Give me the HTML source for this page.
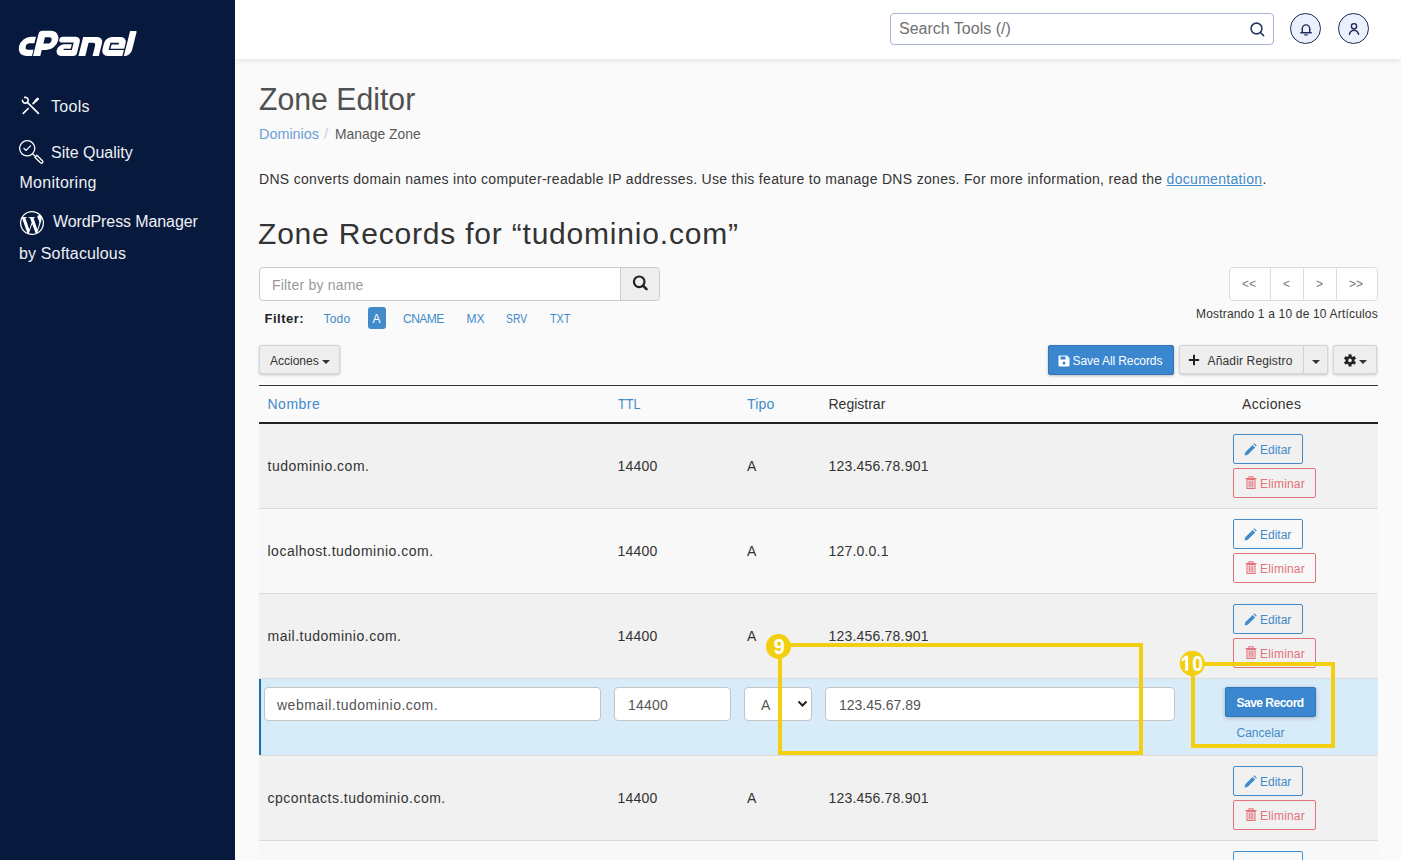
<!DOCTYPE html>
<html><head><meta charset="utf-8"><title>Zone Editor</title>
<style>
html,body{margin:0;padding:0;width:1401px;height:860px;overflow:hidden;background:#fafafa;font-family:"Liberation Sans", sans-serif;}
.t{position:absolute;white-space:nowrap;}
</style></head><body>
<div style="position:absolute;left:235px;top:59px;width:1166px;height:801px;background:#fafafa"></div>
<div style="position:absolute;left:235px;top:0px;width:1166px;height:59px;background:#fff;box-shadow:0 2px 6px rgba(0,0,0,.09);z-index:2"></div>
<div style="position:absolute;left:0px;top:0px;width:235px;height:860px;background:#07193c;z-index:3"></div>
<div style="position:absolute;left:890px;top:13px;width:382px;height:30px;border:1px solid #a8b3d4;border-radius:4px;background:#fff;z-index:4"></div>
<div class="t" style="left:899.00px;top:21px;font-size:16px;line-height:16px;color:#707070;z-index:5">Search Tools (/)</div>
<svg style="position:absolute;left:1248px;top:19px;z-index:5" width="20" height="20" viewBox="0 0 20 20">
<circle cx="8.5" cy="9.5" r="5.4" fill="none" stroke="#25396b" stroke-width="1.6"/>
<line x1="12.5" y1="13.5" x2="15.6" y2="16.6" stroke="#25396b" stroke-width="1.6" stroke-linecap="round"/></svg>
<div style="position:absolute;left:1290px;top:13px;width:29px;height:29px;border:1.5px solid #1b2a57;border-radius:50%;background:#eceffc;z-index:4"></div>
<div style="position:absolute;left:1338px;top:13px;width:29px;height:29px;border:1.5px solid #1b2a57;border-radius:50%;background:#eceffc;z-index:4"></div>
<svg style="position:absolute;left:1296px;top:19px;z-index:5" width="20" height="20" viewBox="0 0 20 20">
<path d="M6.3 13.6 V9.6 a3.7 3.7 0 0 1 7.4 0 V13.6" fill="none" stroke="#1b2a57" stroke-width="1.4"/>
<line x1="4.8" y1="13.8" x2="15.2" y2="13.8" stroke="#1b2a57" stroke-width="1.4" stroke-linecap="round"/>
<line x1="8.8" y1="15.9" x2="11.2" y2="15.9" stroke="#1b2a57" stroke-width="1.2" stroke-linecap="round"/></svg>
<svg style="position:absolute;left:1344px;top:19px;z-index:5" width="20" height="20" viewBox="0 0 20 20">
<circle cx="10" cy="7.2" r="2.6" fill="none" stroke="#1b2a57" stroke-width="1.4"/>
<path d="M5.4 15.3 Q6.5 11.3 10 11.3 Q13.5 11.3 14.6 15.3" fill="none" stroke="#1b2a57" stroke-width="1.4" stroke-linecap="round"/></svg>
<svg style="position:absolute;left:0;top:0;z-index:4" width="235" height="280" viewBox="0 0 235 280">
<g transform="translate(0 56) skewX(-14) translate(0 -56)">
<g fill="#fff">
<path d="M31.2,36.8 H26.2 A9.6,9.6 0 0 0 26.2,56 H32 V49.8 H26.65 A3.25,3.25 0 0 1 26.65,43.3 H31.2 Z"/>
<path d="M33,56 V34 A3.2,3.2 0 0 1 36.2,30.8 H44.65 A9.65,9.65 0 0 1 44.65,50.1 H40.3 V56 Z"/>
<path d="M58,36.8 H71 A5.3,5.3 0 0 1 76.3,42.1 V53 A3,3 0 0 1 73.3,56 H70.3 V42.4 H58 A2.8,2.8 0 0 1 58,36.8 Z"/>
<path d="M68.9,44.3 H61.05 A5.85,5.85 0 0 0 61.05,56 H70.8 V50.1 H62 V48.8 H68.9 Z"/>
<path d="M78.4,56 V36.9 H92.5 A6.3,6.3 0 0 1 98.8,43.2 V56 H92.5 V45.8 A3,3 0 0 0 89.5,42.8 H85.3 V56 Z"/>
<path d="M107.5,36.9 H116.1 A6.3,6.3 0 0 1 122.4,43.2 V56 H107.5 A6.7,6.7 0 0 1 100.8,49.3 V43.6 A6.7,6.7 0 0 1 107.5,36.9 Z"/>
<path d="M123.9,31 H129.6 A1,1 0 0 1 130.6,32 V49.7 A6.3,6.3 0 0 1 124.3,56 H123.8 Z"/>
</g>
<g fill="#07193c">
<path d="M40.3,37.3 H44.45 A3.15,3.15 0 0 1 44.45,43.6 H40.3 Z"/>
<path d="M107.1,42.8 H115.7 V44.4 H108.7 V48.8 H123 V49.9 H107.1 Z"/>
</g></g>
<g stroke="#fff" fill="none" stroke-linecap="round">
<path d="M24.7 97.4 A2.9 2.9 0 1 1 22.4 100.3" stroke-width="1.6"/>
<line x1="27.6" y1="102.6" x2="38.4" y2="113.4" stroke-width="1.7"/>
<line x1="23.3" y1="113.4" x2="28.2" y2="108.5" stroke-width="1.7"/>
<line x1="33.2" y1="103.5" x2="35" y2="101.7" stroke-width="1.9"/>
<line x1="35.4" y1="101.2" x2="37.7" y2="98.9" stroke-width="2.6"/>
</g>
<g stroke="#fff" stroke-width="1.3" fill="none">
<circle cx="27.2" cy="148.3" r="7.6"/>
<path d="M24 148.5 L26.1 150.4 L30.5 145.9" stroke-linecap="round" stroke-linejoin="round"/>
<line x1="32.6" y1="153.7" x2="35" y2="156.1"/>
<path d="M34.9 157.2 L36.9 155.2 L42.5 160.8 A1.41 1.41 0 0 1 40.5 162.8 Z" stroke-linejoin="round"/>
</g>
<g transform="translate(20 211)">
<path fill="#fff" d="M21.469 6.825c.84 1.537 1.318 3.3 1.318 5.175 0 3.979-2.156 7.456-5.363 9.325l3.295-9.527c.615-1.54.82-2.771.82-3.864 0-.405-.026-.78-.07-1.11m-7.981.105c.647-.03 1.232-.105 1.232-.105.582-.075.514-.93-.067-.899 0 0-1.755.135-2.88.135-1.064 0-2.85-.15-2.85-.15-.585-.03-.661.855-.075.885 0 0 .54.061 1.125.09l1.68 4.605-2.37 7.08L5.354 6.9c.649-.03 1.234-.1 1.234-.1.585-.075.516-.93-.065-.896 0 0-1.746.138-2.874.138-.2 0-.438-.008-.69-.015C4.911 3.15 8.235 1.215 12 1.215c2.809 0 5.365 1.072 7.286 2.833-.046-.003-.091-.009-.141-.009-1.06 0-1.812.923-1.812 1.914 0 .89.513 1.643 1.06 2.531.411.72.89 1.643.89 2.977 0 .915-.354 1.994-.821 3.479l-1.075 3.585-3.9-11.61.001.014zM12 22.784c-1.059 0-2.081-.153-3.048-.437l3.237-9.406 3.315 9.087c.024.053.05.101.078.149-1.12.393-2.325.609-3.582.609M1.211 12c0-1.564.336-3.05.935-4.39L7.29 21.709C3.694 19.96 1.212 16.271 1.211 12M12 0C5.385 0 0 5.385 0 12s5.385 12 12 12 12-5.385 12-12S18.615 0 12 0"/>
</g>
</svg>
<div class="t" style="left:51.00px;top:99px;font-size:16px;line-height:16px;color:#eef0f5;letter-spacing:0.3px;z-index:4">Tools</div>
<div class="t" style="left:51.00px;top:145px;font-size:16px;line-height:16px;color:#eef0f5;z-index:4">Site Quality</div>
<div class="t" style="left:19.50px;top:175px;font-size:16px;line-height:16px;color:#eef0f5;letter-spacing:0.25px;z-index:4">Monitoring</div>
<div class="t" style="left:53.00px;top:214px;font-size:16px;line-height:16px;color:#eef0f5;letter-spacing:-0.1px;z-index:4">WordPress Manager</div>
<div class="t" style="left:19.00px;top:246px;font-size:16px;line-height:16px;color:#eef0f5;letter-spacing:0.15px;z-index:4">by Softaculous</div>
<div class="t" style="left:259.00px;top:84px;font-size:31px;line-height:31px;color:#505050;transform:scaleX(0.975);transform-origin:0 0;">Zone Editor</div>
<div class="t" style="left:258.50px;top:126px;font-size:15px;line-height:15px;color:#6a9fd8;transform:scaleX(0.96);transform-origin:0 0;">Dominios</div>
<div class="t" style="left:324.00px;top:126px;font-size:15px;line-height:15px;color:#cfcfcf;">/</div>
<div class="t" style="left:335.30px;top:126px;font-size:15px;line-height:15px;color:#5a5a5a;transform:scaleX(0.925);transform-origin:0 0;">Manage Zone</div>
<div class="t" style="left:259.00px;top:172px;font-size:14px;line-height:14px;color:#333;letter-spacing:0.31px;">DNS converts domain names into computer-readable IP addresses. Use this feature to manage DNS zones. For more information, read the <span style="color:#428bca;text-decoration:underline">documentation</span>.</div>
<div class="t" style="left:258.00px;top:219px;font-size:30px;line-height:30px;color:#333;letter-spacing:0.8px;">Zone Records for “tudominio.com”</div>
<div style="position:absolute;left:259px;top:267px;width:361px;height:32px;border:1px solid #ccc;border-radius:4px 0 0 4px;background:#fff"></div>
<div class="t" style="left:272.00px;top:278px;font-size:14px;line-height:14px;color:#999;letter-spacing:0.2px;">Filter by name</div>
<div style="position:absolute;left:620px;top:267px;width:38px;height:32px;border:1px solid #ccc;border-radius:0 4px 4px 0;background:#eee"></div>
<svg style="position:absolute;left:630px;top:272px" width="20" height="22" viewBox="0 0 20 22">
<circle cx="9.2" cy="9.8" r="5.3" fill="none" stroke="#222" stroke-width="2.2"/>
<line x1="13" y1="13.6" x2="16.5" y2="17.1" stroke="#222" stroke-width="2.6" stroke-linecap="round"/></svg>
<div class="t" style="left:264.50px;top:312px;font-size:13px;line-height:13px;color:#222;font-weight:700;letter-spacing:0.5px;">Filter:</div>
<div class="t" style="left:323.50px;top:313px;font-size:12px;line-height:12px;color:#428bca;letter-spacing:0.2px;">Todo</div>
<div style="position:absolute;left:368px;top:307px;width:18px;height:21.5px;background:#428bca;border-radius:3px"></div>
<div class="t" style="left:372.50px;top:313px;font-size:12px;line-height:12px;color:#fff;">A</div>
<div class="t" style="left:403.00px;top:313px;font-size:12px;line-height:12px;color:#428bca;letter-spacing:-0.5px;">CNAME</div>
<div class="t" style="left:466.50px;top:313px;font-size:12px;line-height:12px;color:#428bca;">MX</div>
<div class="t" style="left:506.00px;top:313px;font-size:12px;line-height:12px;color:#428bca;transform:scaleX(0.86);transform-origin:0 0;">SRV</div>
<div class="t" style="left:549.50px;top:313px;font-size:12px;line-height:12px;color:#428bca;transform:scaleX(0.9);transform-origin:0 0;">TXT</div>
<div style="position:absolute;left:1229px;top:267px;width:147px;height:32px;border:1px solid #ddd;border-radius:4px;background:#fff"></div>
<div style="position:absolute;left:1270px;top:268px;width:1px;height:32px;background:#ddd"></div>
<div style="position:absolute;left:1303px;top:268px;width:1px;height:32px;background:#ddd"></div>
<div style="position:absolute;left:1336px;top:268px;width:1px;height:32px;background:#ddd"></div>
<div class="t" style="left:1242.00px;top:278px;font-size:12px;line-height:12px;color:#777;">&lt;&lt;</div>
<div class="t" style="left:1283.00px;top:278px;font-size:12px;line-height:12px;color:#777;">&lt;</div>
<div class="t" style="left:1316.00px;top:278px;font-size:12px;line-height:12px;color:#777;">&gt;</div>
<div class="t" style="left:1349.00px;top:278px;font-size:12px;line-height:12px;color:#777;">&gt;&gt;</div>
<div class="t" style="left:1196.00px;top:308px;font-size:12px;line-height:12px;color:#333;letter-spacing:0.18px;">Mostrando 1 a 10 de 10 Artículos</div>
<div style="position:absolute;left:259px;top:345px;width:79px;height:27px;background:#eee;border:1px solid #d6d6d6;border-radius:2px;box-shadow:0 1px 3px rgba(0,0,0,.22)"></div>
<div class="t" style="left:270.00px;top:355px;font-size:12px;line-height:12px;color:#333;">Acciones</div>
<div style="position:absolute;left:322px;top:360px;width:0;height:0;border-left:4px solid transparent;border-right:4px solid transparent;border-top:4px solid #333"></div>
<div style="position:absolute;left:1048px;top:345px;width:124px;height:28px;background:#3a87d0;border:1px solid #2f76ba;border-radius:2px;box-shadow:0 1px 3px rgba(0,0,0,.25)"></div>
<svg style="position:absolute;left:1058px;top:355px" width="12" height="12" viewBox="0 0 12 12">
<path d="M0.5 1.5 a1 1 0 0 1 1 -1 h7.5 l2.5 2.5 v7.5 a1 1 0 0 1 -1 1 h-9 a1 1 0 0 1 -1 -1 z" fill="#fff"/>
<rect x="2.5" y="1.5" width="5" height="3" fill="#3a87d0"/><circle cx="6" cy="8" r="1.5" fill="#3a87d0"/></svg>
<div class="t" style="left:1072.50px;top:355px;font-size:12px;line-height:12px;color:#fff;letter-spacing:-0.1px;">Save All Records</div>
<div style="position:absolute;left:1179px;top:345px;width:147px;height:27px;background:#eee;border:1px solid #d6d6d6;border-radius:2px;box-shadow:0 1px 3px rgba(0,0,0,.22)"></div>
<div style="position:absolute;left:1303px;top:346px;width:1px;height:27px;background:#d0d0d0"></div>
<svg style="position:absolute;left:1188px;top:354px" width="12" height="12" viewBox="0 0 12 12">
<path d="M6 0.8 V11.2 M0.8 6 H11.2" stroke="#222" stroke-width="2"/></svg>
<div class="t" style="left:1207.50px;top:355px;font-size:12px;line-height:12px;color:#333;letter-spacing:0.15px;">Añadir Registro</div>
<div style="position:absolute;left:1312px;top:359.5px;width:0;height:0;border-left:4px solid transparent;border-right:4px solid transparent;border-top:4.5px solid #333"></div>
<div style="position:absolute;left:1333px;top:345px;width:42px;height:27px;background:#eee;border:1px solid #d6d6d6;border-radius:2px;box-shadow:0 1px 3px rgba(0,0,0,.22)"></div>
<svg style="position:absolute;left:1343px;top:353px" width="14" height="14" viewBox="0 0 14 14">
<g fill="#222"><circle cx="7" cy="7.4" r="4.4"/>
<g id="tt"><rect x="5.5" y="1.3" width="3" height="3"/><rect x="5.5" y="10.5" width="3" height="3"/></g>
<use href="#tt" transform="rotate(60 7 7.4)"/><use href="#tt" transform="rotate(120 7 7.4)"/></g><circle cx="7" cy="7.4" r="1.8" fill="#eee"/></svg>
<div style="position:absolute;left:1359px;top:359.5px;width:0;height:0;border-left:4px solid transparent;border-right:4px solid transparent;border-top:4.5px solid #333"></div>
<div style="position:absolute;left:259px;top:385px;width:1119px;height:1px;background:#333"></div>
<div style="position:absolute;left:259px;top:422px;width:1119px;height:2px;background:#222"></div>
<div class="t" style="left:267.50px;top:397px;font-size:14px;line-height:14px;color:#428bca;letter-spacing:0.5px;">Nombre</div>
<div class="t" style="left:617.50px;top:397px;font-size:14px;line-height:14px;color:#428bca;transform:scaleX(0.9);transform-origin:0 0;">TTL</div>
<div class="t" style="left:747.00px;top:397px;font-size:14px;line-height:14px;color:#428bca;letter-spacing:0.2px;">Tipo</div>
<div class="t" style="left:828.50px;top:397px;font-size:14px;line-height:14px;color:#333;">Registrar</div>
<div class="t" style="left:1242.00px;top:397px;font-size:14px;line-height:14px;color:#333;letter-spacing:0.3px;">Acciones</div>
<div style="position:absolute;left:259px;top:424px;width:1119px;height:84px;background:#f1f1f1"></div>
<div style="position:absolute;left:259px;top:508px;width:1119px;height:1px;background:#dcdcdc"></div>
<div class="t" style="left:267.50px;top:459px;font-size:14px;line-height:14px;color:#333;letter-spacing:0.5px;">tudominio.com.</div>
<div class="t" style="left:617.50px;top:459px;font-size:14px;line-height:14px;color:#333;letter-spacing:0.2px;">14400</div>
<div class="t" style="left:747.00px;top:459px;font-size:14px;line-height:14px;color:#333;">A</div>
<div class="t" style="left:828.50px;top:459px;font-size:14px;line-height:14px;color:#333;letter-spacing:0.2px;">123.456.78.901</div>
<div style="position:absolute;left:1233px;top:434px;width:68px;height:28px;border:1px solid #428bca;border-radius:2px"></div>
<svg style="position:absolute;left:1244px;top:443px" width="14" height="13" viewBox="0 0 14 13"><path d="M0.5 12.5 L1.3 9.2 L8.6 1.9 L11.1 4.4 L3.8 11.7 Z M9.4 1.1 L10.3 0.2 L12.8 2.7 L11.9 3.6 Z" fill="#428bca"/></svg>
<div class="t" style="left:1260.00px;top:444px;font-size:12px;line-height:12px;color:#428bca;">Editar</div>
<div style="position:absolute;left:1233px;top:468px;width:81px;height:28px;border:1px solid #e2737b;border-radius:2px"></div>
<svg style="position:absolute;left:1245px;top:476px" width="12" height="14" viewBox="0 0 12 14"><g fill="none" stroke="#e2737b" stroke-width="1.1"><path d="M0.5 2.5 H11.5 M4 2.5 V0.8 H8 V2.5"/><path d="M2 3.5 V12.5 H10 V3.5 Z"/><path d="M4.2 4.5 V11.5 M6 4.5 V11.5 M7.8 4.5 V11.5"/></g></svg>
<div class="t" style="left:1260.00px;top:478px;font-size:12px;line-height:12px;color:#e2737b;letter-spacing:0.2px;">Eliminar</div>
<div style="position:absolute;left:259px;top:509px;width:1119px;height:84px;background:#f8f8f8"></div>
<div style="position:absolute;left:259px;top:593px;width:1119px;height:1px;background:#dcdcdc"></div>
<div class="t" style="left:267.50px;top:544px;font-size:14px;line-height:14px;color:#333;letter-spacing:0.5px;">localhost.tudominio.com.</div>
<div class="t" style="left:617.50px;top:544px;font-size:14px;line-height:14px;color:#333;letter-spacing:0.2px;">14400</div>
<div class="t" style="left:747.00px;top:544px;font-size:14px;line-height:14px;color:#333;">A</div>
<div class="t" style="left:828.50px;top:544px;font-size:14px;line-height:14px;color:#333;letter-spacing:0.2px;">127.0.0.1</div>
<div style="position:absolute;left:1233px;top:519px;width:68px;height:28px;border:1px solid #428bca;border-radius:2px"></div>
<svg style="position:absolute;left:1244px;top:528px" width="14" height="13" viewBox="0 0 14 13"><path d="M0.5 12.5 L1.3 9.2 L8.6 1.9 L11.1 4.4 L3.8 11.7 Z M9.4 1.1 L10.3 0.2 L12.8 2.7 L11.9 3.6 Z" fill="#428bca"/></svg>
<div class="t" style="left:1260.00px;top:529px;font-size:12px;line-height:12px;color:#428bca;">Editar</div>
<div style="position:absolute;left:1233px;top:553px;width:81px;height:28px;border:1px solid #e2737b;border-radius:2px"></div>
<svg style="position:absolute;left:1245px;top:561px" width="12" height="14" viewBox="0 0 12 14"><g fill="none" stroke="#e2737b" stroke-width="1.1"><path d="M0.5 2.5 H11.5 M4 2.5 V0.8 H8 V2.5"/><path d="M2 3.5 V12.5 H10 V3.5 Z"/><path d="M4.2 4.5 V11.5 M6 4.5 V11.5 M7.8 4.5 V11.5"/></g></svg>
<div class="t" style="left:1260.00px;top:563px;font-size:12px;line-height:12px;color:#e2737b;letter-spacing:0.2px;">Eliminar</div>
<div style="position:absolute;left:259px;top:594px;width:1119px;height:84px;background:#f1f1f1"></div>
<div style="position:absolute;left:259px;top:678px;width:1119px;height:1px;background:#dcdcdc"></div>
<div class="t" style="left:267.50px;top:629px;font-size:14px;line-height:14px;color:#333;letter-spacing:0.5px;">mail.tudominio.com.</div>
<div class="t" style="left:617.50px;top:629px;font-size:14px;line-height:14px;color:#333;letter-spacing:0.2px;">14400</div>
<div class="t" style="left:747.00px;top:629px;font-size:14px;line-height:14px;color:#333;">A</div>
<div class="t" style="left:828.50px;top:629px;font-size:14px;line-height:14px;color:#333;letter-spacing:0.2px;">123.456.78.901</div>
<div style="position:absolute;left:1233px;top:604px;width:68px;height:28px;border:1px solid #428bca;border-radius:2px"></div>
<svg style="position:absolute;left:1244px;top:613px" width="14" height="13" viewBox="0 0 14 13"><path d="M0.5 12.5 L1.3 9.2 L8.6 1.9 L11.1 4.4 L3.8 11.7 Z M9.4 1.1 L10.3 0.2 L12.8 2.7 L11.9 3.6 Z" fill="#428bca"/></svg>
<div class="t" style="left:1260.00px;top:614px;font-size:12px;line-height:12px;color:#428bca;">Editar</div>
<div style="position:absolute;left:1233px;top:638px;width:81px;height:28px;border:1px solid #e2737b;border-radius:2px"></div>
<svg style="position:absolute;left:1245px;top:646px" width="12" height="14" viewBox="0 0 12 14"><g fill="none" stroke="#e2737b" stroke-width="1.1"><path d="M0.5 2.5 H11.5 M4 2.5 V0.8 H8 V2.5"/><path d="M2 3.5 V12.5 H10 V3.5 Z"/><path d="M4.2 4.5 V11.5 M6 4.5 V11.5 M7.8 4.5 V11.5"/></g></svg>
<div class="t" style="left:1260.00px;top:648px;font-size:12px;line-height:12px;color:#e2737b;letter-spacing:0.2px;">Eliminar</div>
<div style="position:absolute;left:259px;top:756px;width:1119px;height:84px;background:#f1f1f1"></div>
<div style="position:absolute;left:259px;top:840px;width:1119px;height:1px;background:#dcdcdc"></div>
<div class="t" style="left:267.50px;top:791px;font-size:14px;line-height:14px;color:#333;letter-spacing:0.5px;">cpcontacts.tudominio.com.</div>
<div class="t" style="left:617.50px;top:791px;font-size:14px;line-height:14px;color:#333;letter-spacing:0.2px;">14400</div>
<div class="t" style="left:747.00px;top:791px;font-size:14px;line-height:14px;color:#333;">A</div>
<div class="t" style="left:828.50px;top:791px;font-size:14px;line-height:14px;color:#333;letter-spacing:0.2px;">123.456.78.901</div>
<div style="position:absolute;left:1233px;top:766px;width:68px;height:28px;border:1px solid #428bca;border-radius:2px"></div>
<svg style="position:absolute;left:1244px;top:775px" width="14" height="13" viewBox="0 0 14 13"><path d="M0.5 12.5 L1.3 9.2 L8.6 1.9 L11.1 4.4 L3.8 11.7 Z M9.4 1.1 L10.3 0.2 L12.8 2.7 L11.9 3.6 Z" fill="#428bca"/></svg>
<div class="t" style="left:1260.00px;top:776px;font-size:12px;line-height:12px;color:#428bca;">Editar</div>
<div style="position:absolute;left:1233px;top:800px;width:81px;height:28px;border:1px solid #e2737b;border-radius:2px"></div>
<svg style="position:absolute;left:1245px;top:808px" width="12" height="14" viewBox="0 0 12 14"><g fill="none" stroke="#e2737b" stroke-width="1.1"><path d="M0.5 2.5 H11.5 M4 2.5 V0.8 H8 V2.5"/><path d="M2 3.5 V12.5 H10 V3.5 Z"/><path d="M4.2 4.5 V11.5 M6 4.5 V11.5 M7.8 4.5 V11.5"/></g></svg>
<div class="t" style="left:1260.00px;top:810px;font-size:12px;line-height:12px;color:#e2737b;letter-spacing:0.2px;">Eliminar</div>
<div style="position:absolute;left:259px;top:841px;width:1119px;height:84px;background:#f8f8f8"></div>
<div style="position:absolute;left:259px;top:925px;width:1119px;height:1px;background:#dcdcdc"></div>
<div style="position:absolute;left:1233px;top:851px;width:68px;height:28px;border:1px solid #428bca;border-radius:2px"></div>
<svg style="position:absolute;left:1244px;top:860px" width="14" height="13" viewBox="0 0 14 13"><path d="M0.5 12.5 L1.3 9.2 L8.6 1.9 L11.1 4.4 L3.8 11.7 Z M9.4 1.1 L10.3 0.2 L12.8 2.7 L11.9 3.6 Z" fill="#428bca"/></svg>
<div class="t" style="left:1260.00px;top:861px;font-size:12px;line-height:12px;color:#428bca;">Editar</div>
<div style="position:absolute;left:1233px;top:885px;width:81px;height:28px;border:1px solid #e2737b;border-radius:2px"></div>
<svg style="position:absolute;left:1245px;top:893px" width="12" height="14" viewBox="0 0 12 14"><g fill="none" stroke="#e2737b" stroke-width="1.1"><path d="M0.5 2.5 H11.5 M4 2.5 V0.8 H8 V2.5"/><path d="M2 3.5 V12.5 H10 V3.5 Z"/><path d="M4.2 4.5 V11.5 M6 4.5 V11.5 M7.8 4.5 V11.5"/></g></svg>
<div class="t" style="left:1260.00px;top:895px;font-size:12px;line-height:12px;color:#e2737b;letter-spacing:0.2px;">Eliminar</div>
<div style="position:absolute;left:259px;top:678px;width:1119px;height:1px;background:#dcdcdc"></div>
<div style="position:absolute;left:259px;top:679px;width:1119px;height:76px;background:#d8ebf8"></div>
<div style="position:absolute;left:259px;top:755px;width:1119px;height:1px;background:#dcdcdc"></div>
<div style="position:absolute;left:259px;top:679px;width:2px;height:76px;background:#1a6fb5"></div>
<div style="position:absolute;left:264px;top:687px;width:335px;height:32px;background:#fff;border:1px solid #c4c4c4;border-radius:4px"></div>
<div class="t" style="left:277.00px;top:698px;font-size:14px;line-height:14px;color:#555;letter-spacing:0.5px;">webmail.tudominio.com.</div>
<div style="position:absolute;left:614px;top:687px;width:115px;height:32px;background:#fff;border:1px solid #c4c4c4;border-radius:4px"></div>
<div class="t" style="left:628.00px;top:698px;font-size:14px;line-height:14px;color:#555;letter-spacing:0.2px;">14400</div>
<div style="position:absolute;left:744px;top:687px;width:66px;height:32px;background:#fff;border:1px solid #c4c4c4;border-radius:4px"></div>
<div class="t" style="left:761.00px;top:698px;font-size:14px;line-height:14px;color:#555;">A</div>
<svg style="position:absolute;left:797px;top:700px" width="12" height="8" viewBox="0 0 12 8"><path d="M1.5 1.5 L5.5 5.5 L9.5 1.5" fill="none" stroke="#222" stroke-width="2"/></svg>
<div style="position:absolute;left:825px;top:687px;width:348px;height:32px;background:#fff;border:1px solid #c4c4c4;border-radius:4px"></div>
<div class="t" style="left:839.00px;top:698px;font-size:14px;line-height:14px;color:#555;">123.45.67.89</div>
<div style="position:absolute;left:1225px;top:687px;width:91px;height:30px;background:#3a87d0;border:1px solid #2f76ba;box-sizing:border-box;border-radius:2px;box-shadow:0 1px 4px rgba(0,0,0,.25)"></div>
<div class="t" style="left:1236.50px;top:697px;font-size:12px;line-height:12px;color:#fff;font-weight:700;letter-spacing:-0.5px;">Save Record</div>
<div class="t" style="left:1236.50px;top:727px;font-size:12px;line-height:12px;color:#428bca;">Cancelar</div>
<svg style="position:absolute;left:0;top:0;z-index:10" width="1401" height="860" viewBox="0 0 1401 860">
<rect x="780" y="645" width="361" height="108" fill="none" stroke="#f2cf10" stroke-width="4"/>
<rect x="1193" y="664" width="140" height="82" fill="none" stroke="#f2cf10" stroke-width="4"/>
<circle cx="778.5" cy="646.5" r="12.5" fill="#f2cf10"/>
<circle cx="1192.3" cy="663.3" r="12.5" fill="#f2cf10"/>
<text x="779.2" y="654.1" text-anchor="middle" font-family="Liberation Sans" font-weight="700" font-size="22.5" fill="#fff" transform="translate(779.2 0) scale(0.88 1) translate(-779.2 0)">9</text>
<path d="M1185.2,655.8 H1188.2 V670.7 H1185.2 V659.6 Q1183.6,660.9 1181.7,661.4 V658.7 Q1184,657.7 1185.2,655.8 Z" fill="#fff"/>
<text x="1197.7" y="670.8" text-anchor="middle" font-family="Liberation Sans" font-weight="700" font-size="22.5" fill="#fff" transform="translate(1197.7 0) scale(0.86 1) translate(-1197.7 0)">0</text>
</svg>
</body></html>
